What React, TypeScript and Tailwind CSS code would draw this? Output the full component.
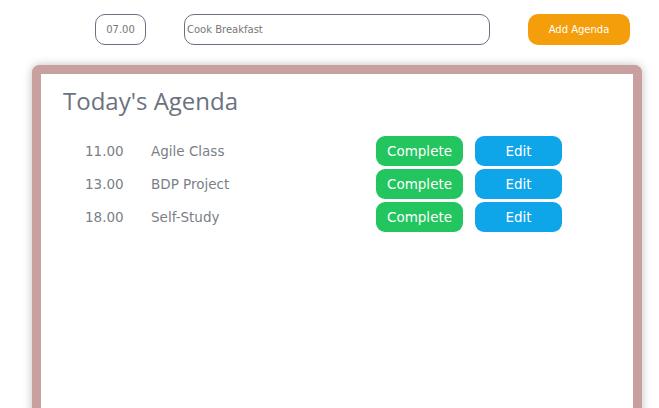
import { useState } from "react";

type Agenda = { time: string; title: string };

const initial: Agenda[] = [
  { time: "11.00", title: "Agile Class" },
  { time: "13.00", title: "BDP Project" },
  { time: "18.00", title: "Self-Study" },
];

export default function App() {
  const [items, setItems] = useState<Agenda[]>(initial);
  const [time, setTime] = useState("07.00");
  const [title, setTitle] = useState("Cook Breakfast");

  const font = { fontFamily: '"DejaVu Sans", "Open Sans", sans-serif' };

  return (
    <div className="w-[659px] h-[408px] bg-white overflow-hidden" style={font}>
      {/* Input bar */}
      <div className="flex items-start pl-[95px] pt-[14px]">
        <input
          value={time}
          onChange={(e) => setTime(e.target.value)}
          className="w-[51px] h-[31px] rounded-[10px] border border-gray-500 text-center text-[10px] text-[#777] outline-none"
        />
        <input
          value={title}
          onChange={(e) => setTitle(e.target.value)}
          className="ml-[38px] w-[306px] h-[31px] rounded-[10px] border border-gray-500 px-[2px] text-[10px] text-[#777] outline-none"
        />
        <button
          onClick={() => setItems([...items, { time, title }])}
          className="ml-[38px] w-[102px] h-[31px] rounded-[10px] bg-[#f59e0b] text-white text-[10px]"
        >
          Add Agenda
        </button>
      </div>

      {/* Agenda card */}
      <div className="ml-[32px] mt-[20px] w-[610px] h-[400px] border-[9px] border-b-0 border-[#c9a0a0] rounded-t-[8px] bg-white shadow-[0_0_10px_rgba(0,0,0,0.25)]">
        <h2
          className="pl-[22px] pt-[11px] text-[24px] leading-[32px] text-[#6b7280]"
          style={{ fontFamily: '"Open Sans", sans-serif' }}
        >
          Today's Agenda
        </h2>
        <div className="mt-[19px] flex flex-col gap-[3px]">
          {items.map((it, i) => (
            <div key={i} className="flex items-center pl-[44px] h-[30px]">
              <span className="w-[66px] text-[13.5px] text-[#7a7f87]">{it.time}</span>
              <span className="w-[225px] text-[13.5px] text-[#7a7f87]">{it.title}</span>
              <button className="w-[87px] h-[30px] rounded-[9px] bg-[#22c55e] text-white text-[13.5px]">
                Complete
              </button>
              <button className="ml-[12px] w-[87px] h-[30px] rounded-[9px] bg-[#0ea5e9] text-white text-[13.5px]">
                Edit
              </button>
            </div>
          ))}
        </div>
      </div>
    </div>
  );
}
